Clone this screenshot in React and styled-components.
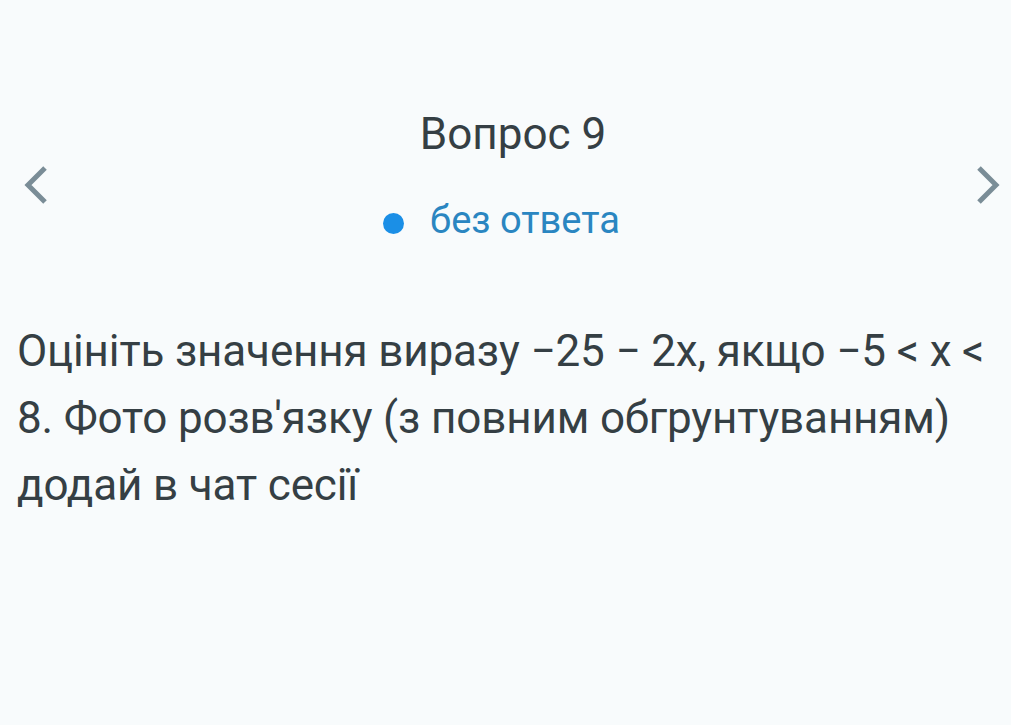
import React from "react";
import styled, { createGlobalStyle } from "styled-components";

const GlobalStyle = createGlobalStyle`
  html, body {
    margin: 0;
    padding: 0;
    background: #f8fbfc;
  }
  body {
    font-family: Roboto, "Noto Sans", sans-serif;
  }
`;

const Page = styled.div`
  min-height: 725px;
  background: #f8fbfc;
  padding: 108px 17px 0 17px;
  box-sizing: border-box;
`;

const Header = styled.div`
  display: grid;
  grid-template-columns: 40px 1fr 40px;
  align-items: center;
`;

const Center = styled.div`
  display: flex;
  flex-direction: column;
  align-items: center;
`;

const Title = styled.h1`
  margin: 0 0 0 15px;
  font-size: 44px;
  font-weight: 400;
  line-height: 52px;
  color: #353f44;
`;

const Status = styled.div`
  display: flex;
  align-items: center;
  gap: 26px;
  margin-top: 38px;
  margin-left: -8px;
  font-size: 38px;
  line-height: 44px;
  color: #2a86c1;
`;

const Dot = styled.span`
  width: 21px;
  height: 21px;
  border-radius: 50%;
  background: #1b8fe6;
  margin-top: 6px;
`;

const NavButton = styled.button`
  border: none;
  background: transparent;
  padding: 0;
  display: flex;
  justify-content: ${(p) => (p.right ? "flex-end" : "flex-start")};
  margin-left: ${(p) => (p.right ? "0" : "5px")};
  margin-right: ${(p) => (p.right ? "-8px" : "0")};
  margin-top: 20px;
  cursor: pointer;
`;

const Question = styled.p`
  margin: 76px 0 0 0;
  font-size: 44px;
  line-height: 67px;
  letter-spacing: -0.15px;
  color: #353f44;
`;

const Chevron = ({ right }) => (
  <svg width="28" height="40" viewBox="0 0 28 40">
    <path
      d={right ? "M5 3 L22 20 L5 37" : "M23 3 L6 20 L23 37"}
      fill="none"
      stroke="#7a8d97"
      strokeWidth="5"
    />
  </svg>
);

export default function App() {
  return (
    <>
      <GlobalStyle />
      <Page>
        <Header>
          <NavButton>
            <Chevron />
          </NavButton>
          <Center>
            <Title>Вопрос 9</Title>
            <Status>
              <Dot />
              без ответа
            </Status>
          </Center>
          <NavButton right>
            <Chevron right />
          </NavButton>
        </Header>
        <Question>
          Оцініть значення виразу −25 − 2x, якщо −5 &lt; x &lt; 8. Фото
          розв'язку (з повним обгрунтуванням) додай в чат сесії
        </Question>
      </Page>
    </>
  );
}
